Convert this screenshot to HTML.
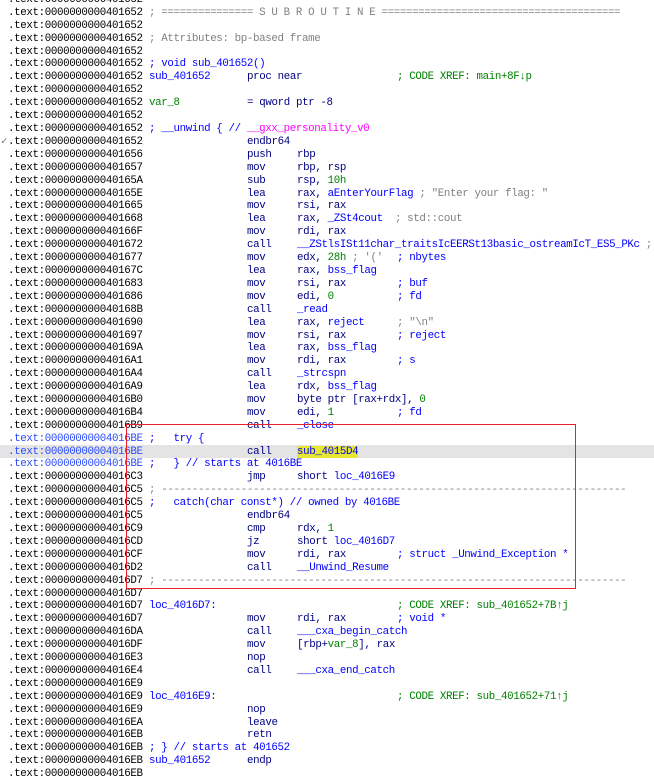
<!DOCTYPE html>
<html><head><meta charset="utf-8"><style>
html,body{margin:0;padding:0;background:#fff;width:654px;height:782px;overflow:hidden;position:relative}
.l{position:absolute;left:0;width:654px;height:13px;line-height:13px;font-family:"Liberation Mono",monospace;font-size:10.8px;letter-spacing:-0.36px;white-space:pre;color:#000080}
.l span{position:absolute;top:0}
.a{left:8px;color:#000}
.ab{left:8px;color:#2a4bff}
.c1{left:149px}
.m{left:247px;color:#000080}
.o{left:297px;color:#000080}
.k{left:397px}
.g{color:#808080}
.b{color:#0000ff}
.n{color:#008000}
.p{color:#ff00ff}
.x{color:#008000}
.hl{background:#e4e4e4}
#box{position:absolute;left:126px;top:424px;width:448px;height:163px;border:1.5px solid #e8202a}
.y{background:#e6e633}
</style></head><body>
<div class="l hl" style="top:445px"></div>
<div class="l" style="top:-6px"><span class="a">.text:0000000000401652</span></div>
<div class="l" style="top:7px"><span class="a">.text:0000000000401652</span><span class="c1 g">; =============== S U B R O U T I N E =======================================</span></div>
<div class="l" style="top:20px"><span class="a">.text:0000000000401652</span></div>
<div class="l" style="top:33px"><span class="a">.text:0000000000401652</span><span class="c1 g">; Attributes: bp-based frame</span></div>
<div class="l" style="top:46px"><span class="a">.text:0000000000401652</span></div>
<div class="l" style="top:58px"><span class="a">.text:0000000000401652</span><span class="c1 b">; void sub_401652()</span></div>
<div class="l" style="top:71px"><span class="a">.text:0000000000401652</span><span class="c1 b">sub_401652</span><span class="m">proc near</span><span class="k x">; CODE XREF: main+8F↓p</span></div>
<div class="l" style="top:84px"><span class="a">.text:0000000000401652</span></div>
<div class="l" style="top:97px"><span class="a">.text:0000000000401652</span><span class="c1 n">var_8</span><span class="m">= qword ptr -8</span></div>
<div class="l" style="top:110px"><span class="a">.text:0000000000401652</span></div>
<div class="l" style="top:123px"><span class="a">.text:0000000000401652</span><span class="c1 b">; __unwind { // <span class="p" style="position:static">__gxx_personality_v0</span></span></div>
<div class="l" style="top:136px"><span style="left:1px;color:#777">✓</span><span class="a">.text:0000000000401652</span><span class="m">endbr64</span></div>
<div class="l" style="top:149px"><span class="a">.text:0000000000401656</span><span class="m">push</span><span class="o">rbp</span></div>
<div class="l" style="top:162px"><span class="a">.text:0000000000401657</span><span class="m">mov</span><span class="o">rbp, rsp</span></div>
<div class="l" style="top:175px"><span class="a">.text:000000000040165A</span><span class="m">sub</span><span class="o">rsp, <b class="n" style="font-weight:normal">10h</b></span></div>
<div class="l" style="top:188px"><span class="a">.text:000000000040165E</span><span class="m">lea</span><span class="o">rax, <i class="b" style="font-style:normal">aEnterYourFlag</i> <i class="g" style="font-style:normal">; "Enter your flag: "</i></span></div>
<div class="l" style="top:200px"><span class="a">.text:0000000000401665</span><span class="m">mov</span><span class="o">rsi, rax</span></div>
<div class="l" style="top:213px"><span class="a">.text:0000000000401668</span><span class="m">lea</span><span class="o">rax, <i class="b" style="font-style:normal">_ZSt4cout</i>  <i class="g" style="font-style:normal">; std::cout</i></span></div>
<div class="l" style="top:226px"><span class="a">.text:000000000040166F</span><span class="m">mov</span><span class="o">rdi, rax</span></div>
<div class="l" style="top:239px"><span class="a">.text:0000000000401672</span><span class="m">call</span><span class="o b">__ZStlsISt11char_traitsIcEERSt13basic_ostreamIcT_ES5_PKc <i style="font-style:normal;color:#808080">;</i></span></div>
<div class="l" style="top:252px"><span class="a">.text:0000000000401677</span><span class="m">mov</span><span class="o">edx, <i class="n" style="font-style:normal">28h</i> <i class="g" style="font-style:normal">; '('</i></span><span class="k b">; nbytes</span></div>
<div class="l" style="top:265px"><span class="a">.text:000000000040167C</span><span class="m">lea</span><span class="o">rax, <i class="b" style="font-style:normal">bss_flag</i></span></div>
<div class="l" style="top:278px"><span class="a">.text:0000000000401683</span><span class="m">mov</span><span class="o">rsi, rax</span><span class="k b">; buf</span></div>
<div class="l" style="top:291px"><span class="a">.text:0000000000401686</span><span class="m">mov</span><span class="o">edi, <i class="n" style="font-style:normal">0</i></span><span class="k b">; fd</span></div>
<div class="l" style="top:304px"><span class="a">.text:000000000040168B</span><span class="m">call</span><span class="o b">_read</span></div>
<div class="l" style="top:317px"><span class="a">.text:0000000000401690</span><span class="m">lea</span><span class="o">rax, <i class="b" style="font-style:normal">reject</i></span><span class="k g">; "\n"</span></div>
<div class="l" style="top:330px"><span class="a">.text:0000000000401697</span><span class="m">mov</span><span class="o">rsi, rax</span><span class="k b">; reject</span></div>
<div class="l" style="top:342px"><span class="a">.text:000000000040169A</span><span class="m">lea</span><span class="o">rax, <i class="b" style="font-style:normal">bss_flag</i></span></div>
<div class="l" style="top:355px"><span class="a">.text:00000000004016A1</span><span class="m">mov</span><span class="o">rdi, rax</span><span class="k b">; s</span></div>
<div class="l" style="top:368px"><span class="a">.text:00000000004016A4</span><span class="m">call</span><span class="o b">_strcspn</span></div>
<div class="l" style="top:381px"><span class="a">.text:00000000004016A9</span><span class="m">lea</span><span class="o">rdx, <i class="b" style="font-style:normal">bss_flag</i></span></div>
<div class="l" style="top:394px"><span class="a">.text:00000000004016B0</span><span class="m">mov</span><span class="o">byte ptr [rax+rdx], <i class="n" style="font-style:normal">0</i></span></div>
<div class="l" style="top:407px"><span class="a">.text:00000000004016B4</span><span class="m">mov</span><span class="o">edi, <i class="n" style="font-style:normal">1</i></span><span class="k b">; fd</span></div>
<div class="l" style="top:420px"><span class="a">.text:00000000004016B9</span><span class="m">call</span><span class="o b">_close</span></div>
<div class="l" style="top:433px"><span class="ab">.text:00000000004016BE</span><span class="c1 b">;   try {</span></div>
<div class="l" style="top:446px"><span class="ab">.text:00000000004016BE</span><span class="m">call</span><span class="o b"><i class="y" style="font-style:normal">sub_4015D4</i></span></div>
<div class="l" style="top:458px"><span class="ab">.text:00000000004016BE</span><span class="c1 b">;   } // starts at 4016BE</span></div>
<div class="l" style="top:471px"><span class="a">.text:00000000004016C3</span><span class="m">jmp</span><span class="o">short <i class="b" style="font-style:normal">loc_4016E9</i></span></div>
<div class="l" style="top:484px"><span class="a">.text:00000000004016C5</span><span class="c1 g">; ----------------------------------------------------------------------------</span></div>
<div class="l" style="top:497px"><span class="a">.text:00000000004016C5</span><span class="c1 b">;   catch(char const*) // owned by 4016BE</span></div>
<div class="l" style="top:510px"><span class="a">.text:00000000004016C5</span><span class="m">endbr64</span></div>
<div class="l" style="top:523px"><span class="a">.text:00000000004016C9</span><span class="m">cmp</span><span class="o">rdx, <i class="n" style="font-style:normal">1</i></span></div>
<div class="l" style="top:536px"><span class="a">.text:00000000004016CD</span><span class="m">jz</span><span class="o">short <i class="b" style="font-style:normal">loc_4016D7</i></span></div>
<div class="l" style="top:549px"><span class="a">.text:00000000004016CF</span><span class="m">mov</span><span class="o">rdi, rax</span><span class="k b">; struct _Unwind_Exception *</span></div>
<div class="l" style="top:562px"><span class="a">.text:00000000004016D2</span><span class="m">call</span><span class="o b">__Unwind_Resume</span></div>
<div class="l" style="top:575px"><span class="a">.text:00000000004016D7</span><span class="c1 g">; ----------------------------------------------------------------------------</span></div>
<div class="l" style="top:588px"><span class="a">.text:00000000004016D7</span></div>
<div class="l" style="top:600px"><span class="a">.text:00000000004016D7</span><span class="c1 b">loc_4016D7:</span><span class="k x">; CODE XREF: sub_401652+7B↑j</span></div>
<div class="l" style="top:613px"><span class="a">.text:00000000004016D7</span><span class="m">mov</span><span class="o">rdi, rax</span><span class="k b">; void *</span></div>
<div class="l" style="top:626px"><span class="a">.text:00000000004016DA</span><span class="m">call</span><span class="o b">___cxa_begin_catch</span></div>
<div class="l" style="top:639px"><span class="a">.text:00000000004016DF</span><span class="m">mov</span><span class="o">[rbp+<i class="n" style="font-style:normal">var_8</i>], rax</span></div>
<div class="l" style="top:652px"><span class="a">.text:00000000004016E3</span><span class="m">nop</span></div>
<div class="l" style="top:665px"><span class="a">.text:00000000004016E4</span><span class="m">call</span><span class="o b">___cxa_end_catch</span></div>
<div class="l" style="top:678px"><span class="a">.text:00000000004016E9</span></div>
<div class="l" style="top:691px"><span class="a">.text:00000000004016E9</span><span class="c1 b">loc_4016E9:</span><span class="k x">; CODE XREF: sub_401652+71↑j</span></div>
<div class="l" style="top:704px"><span class="a">.text:00000000004016E9</span><span class="m">nop</span></div>
<div class="l" style="top:717px"><span class="a">.text:00000000004016EA</span><span class="m">leave</span></div>
<div class="l" style="top:729px"><span class="a">.text:00000000004016EB</span><span class="m">retn</span></div>
<div class="l" style="top:742px"><span class="a">.text:00000000004016EB</span><span class="c1 b">; } // starts at 401652</span></div>
<div class="l" style="top:755px"><span class="a">.text:00000000004016EB</span><span class="c1 b">sub_401652</span><span class="m">endp</span></div>
<div class="l" style="top:768px"><span class="a">.text:00000000004016EB</span></div>
<div id="box"></div>
</body></html>
